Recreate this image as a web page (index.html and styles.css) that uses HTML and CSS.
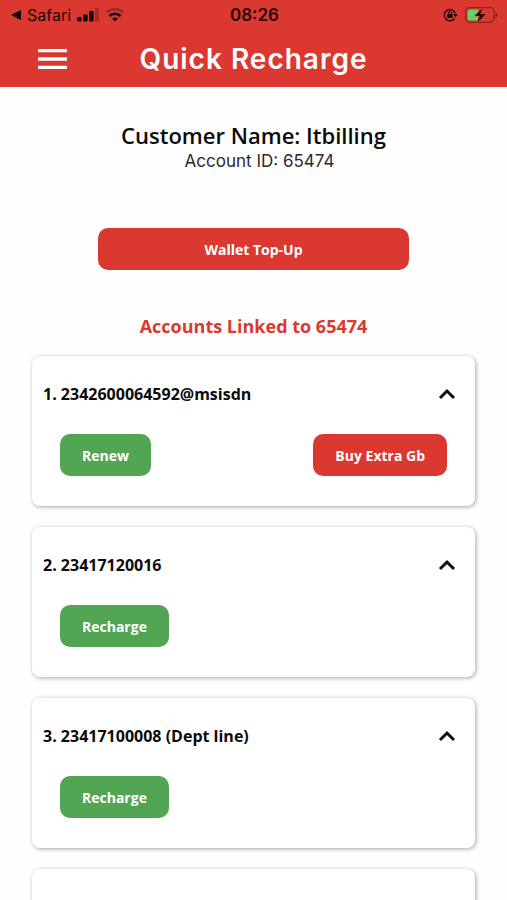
FILE: index.html
```html
<!DOCTYPE html>
<html lang="en">
<head>
  <meta charset="utf-8">
  <meta name="viewport" content="width=device-width, initial-scale=1">
  <title>Quick Recharge</title>
  <link rel="stylesheet" href="styles.css">
</head>
<body>
  <header class="top">
    <div class="status">
      <div class="status-left">
        <svg width="10" height="10" viewBox="0 0 10 10" aria-hidden="true"><path d="M0 5 10 0v10z"/></svg>
        <span class="carrier">Safari</span>
        <svg class="signal" width="22" height="14" viewBox="0 0 22 14" aria-hidden="true"><rect y="9" width="4.600" height="4.500" rx="1"/><rect x="6" y="6.500" width="4.600" height="7" rx="1"/><rect x="12" y="3" width="4.600" height="10.500" rx="1"/><rect x="18" width="4" height="13.500" rx="1" opacity=".25"/></svg>
        <svg class="wifi" width="20" height="14" viewBox="0 0 20 14" fill="none" stroke="#150404" stroke-width="2.600" aria-hidden="true"><path d="M1.500 4.500C6 .2 14 .2 18.500 4.500" opacity=".28"/><path d="M4.400 8C7.500 4.900 12.500 4.900 15.600 8"/><path d="M10 13.500 7 10.600q3-2.300 6 0z" fill="#150404" stroke="none"/></svg>
      </div>
      <time class="clock">08:26</time>
      <div class="status-right">
        <svg width="15" height="14" viewBox="0 0 15 14" aria-hidden="true"><path d="M12.300 5.200A5.700 5.700 0 1 0 11.600 10.500" fill="none" stroke="#260605" stroke-width="1.400"/><path d="M10.300 6h4.400L12.500 9.300z"/><rect x="4.300" y="6" width="5.400" height="4" rx=".6"/><path d="M5.500 6.500V5a1.500 1.500 0 0 1 3 0v1.500" fill="none" stroke="#260605"/></svg>
        <svg width="33" height="18" viewBox="0 0 33 18" aria-hidden="true"><rect x=".7" y="1.700" width="28.500" height="14.600" rx="4" fill="none" stroke="#8b2420" stroke-width="1.300"/><path d="M5 3.500h8v11H5A2.500 2.500 0 0 1 2.500 12V6A2.500 2.500 0 0 1 5 3.500z" fill="#67cf67"/><path d="M30.500 6.500q2 .5 2 2.500t-2 2.500z" fill="#8b2420"/><path d="M18 1.500 9.500 10h5L12 17l9-9h-5.500z" fill="#150404" stroke="#da3830" stroke-width=".6"/></svg>
      </div>
    </div>
    <div class="bar">
      <button class="menu" type="button" aria-label="Menu">
        <svg width="29" height="20" viewBox="0 0 29 20" aria-hidden="true"><path d="M0 1.700h29M0 10h29M0 18.300h29" stroke="#fff" stroke-width="3.300"/></svg>
      </button>
      <h1>Quick Recharge</h1>
    </div>
  </header>

  <main>
    <section class="customer">
      <h2>Customer Name: Itbilling</h2>
      <p>Account ID: 65474</p>
    </section>
    <button class="btn red wallet" type="button">Wallet Top-Up</button>

    <h3 class="linked">Accounts Linked to 65474</h3>
    <div class="cards">
      <article class="card">
        <div class="card-head">
          <h4>1. 2342600064592@msisdn</h4>
          <button class="toggle" type="button" aria-label="Collapse account 1"><svg width="18" height="12" viewBox="0 0 18 12" aria-hidden="true"><path d="m2 10 7-7 7 7"/></svg></button>
        </div>
        <div class="actions">
          <button class="btn green" type="button">Renew</button>
          <button class="btn red" type="button">Buy Extra Gb</button>
        </div>
      </article>
      <article class="card">
        <div class="card-head">
          <h4>2. 23417120016</h4>
          <button class="toggle" type="button" aria-label="Collapse account 2"><svg width="18" height="12" viewBox="0 0 18 12" aria-hidden="true"><path d="m2 10 7-7 7 7"/></svg></button>
        </div>
        <div class="actions">
          <button class="btn green" type="button">Recharge</button>
        </div>
      </article>
      <article class="card">
        <div class="card-head">
          <h4>3. 23417100008 (Dept line)</h4>
          <button class="toggle" type="button" aria-label="Collapse account 3"><svg width="18" height="12" viewBox="0 0 18 12" aria-hidden="true"><path d="m2 10 7-7 7 7"/></svg></button>
        </div>
        <div class="actions">
          <button class="btn green" type="button">Recharge</button>
        </div>
      </article>
      <article class="card next"></article>
    </div>
  </main>
</body>
</html>
```
FILE: styles.css
```css
* {
  box-sizing: border-box;
}

html {
  scrollbar-width: none;
}

body {
  margin: 0;
  background: #fefefe;
  color: #0b0b0b;
  font-family: "Open Sans", sans-serif;
}

h1, h2, h3, h4, p {
  margin: 0;
}

button {
  border: 0;
  padding: 0;
  background: none;
  font: inherit;
  color: inherit;
}

svg {
  display: block;
  flex: none;
}

.top {
  background: #da3830;
  font-family: Inter, sans-serif;
}

.status {
  display: grid;
  grid-template-columns: 1fr auto 1fr;
  align-items: center;
  height: 30px;
  padding: 0 9px 0 11px;
  color: #260605;
  fill: #150404;
}

.status-left,
.status-right {
  display: flex;
  align-items: center;
}

.status-left {
  gap: 6px;
}

.status-right {
  justify-content: flex-end;
  gap: 7px;
}

.carrier {
  font-size: 16px;
}

.clock {
  font-size: 17px;
  font-weight: 600;
}

.bar {
  display: grid;
  grid-template-columns: 1fr auto 1fr;
  align-items: center;
  height: 57px;
  padding: 0 38px;
}

.menu {
  justify-self: start;
}

h1 {
  color: #fff;
  font-size: 28px;
  line-height: 32px;
  font-weight: 600;
  letter-spacing: 1px;
}

main {
  display: flex;
  flex-direction: column;
  padding: 33px 32px 0;
}

.customer {
  text-align: center;
}

h2 {
  font-size: 22px;
  line-height: 30px;
  font-weight: 600;
}

.customer p {
  padding-left: 12px;
  font-family: Inter, sans-serif;
  font-size: 17px;
  line-height: 22px;
  color: #2b2b2b;
}

.btn {
  height: 42px;
  padding: 0 22px;
  border-radius: 10px;
  color: #fff;
  font-size: 14px;
  font-weight: 700;
}

.red {
  background: #da3830;
}

.green {
  background: #52a552;
}

.wallet {
  align-self: center;
  width: 70%;
  margin-top: 56px;
}

.linked {
  margin-top: 43px;
  color: #da3830;
  text-align: center;
  font-size: 18px;
  line-height: 26px;
  font-weight: 700;
}

.cards {
  display: flex;
  flex-direction: column;
  gap: 21px;
  margin-top: 17px;
}

.card {
  padding: 26px 19px 30px 11px;
  border-radius: 8px;
  background: #fff;
  box-shadow: 1px 1px 4px rgba(0, 0, 0, 0.35);
}

.next {
  min-height: 150px;
}

.card-head {
  display: flex;
  justify-content: space-between;
  align-items: center;
}

h4 {
  font-size: 16px;
  line-height: 24px;
  font-weight: 700;
}

.toggle path {
  fill: none;
  stroke: #111;
  stroke-width: 3;
}

.actions {
  display: flex;
  justify-content: space-between;
  margin-top: 28px;
  padding: 0 9px 0 17px;
}
```
